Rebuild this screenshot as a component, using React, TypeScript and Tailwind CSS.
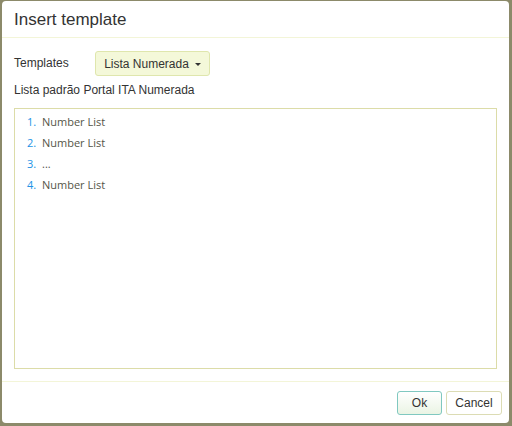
import React from "react";

export default function App() {
  const items = ["Number List", "Number List", "...", "Number List"];
  return (
    <div className="w-[512px] h-[426px] bg-[#8c8a6a] pl-[2px] pr-[3px] pt-[1px] pb-[3px]" style={{ fontFamily: '"Liberation Sans", Arial, sans-serif' }}>
      <div className="w-full h-full bg-white rounded-[4px] flex flex-col">
        <div className="h-[37px] border-b border-[#f3f5d8] flex items-center px-[12px]">
          <span className="text-[17px] text-[#333] leading-none">Insert template</span>
        </div>
        <div className="flex-1 flex flex-col px-[12px] pt-[13px] pb-[12px]">
          <div className="flex items-center h-[25px]">
            <span className="w-[81px] text-[12px] text-[#333] -mt-[2px]">Templates</span>
            <button className="h-[25px] w-[115px] bg-[#f4f8d9] border border-[#dfe6ad] rounded-[3px] flex items-center justify-center gap-[6px] text-[12px] text-[#333]">
              <span>Lista Numerada</span>
              <span className="w-0 h-0 border-l-[3px] border-r-[3px] border-t-[3px] border-l-transparent border-r-transparent border-t-[#333] mt-[1px]" />
            </button>
          </div>
          <div className="text-[12px] text-[#333] mt-[7px] leading-[14px]">Lista padrão Portal ITA Numerada</div>
          <div className="mt-[11px] flex-1 border border-[#dcdca8] pt-[3px] pl-[12px]" style={{ fontFamily: '"Open Sans", sans-serif' }}>
            {items.map((t, i) => (
              <div key={i} className="flex h-[21px] items-center text-[11px]">
                <span className="w-[15px] text-[#2293e6]">{i + 1}.</span>
                <span className="text-[#555548]">{t}</span>
              </div>
            ))}
          </div>
        </div>
        <div className="h-[42px] border-t border-[#f3f5d8] flex items-center justify-end gap-[4px] pr-[7px] pt-[1px]">
          <button className="h-[24px] w-[45px] rounded-[3px] border border-[#80c8c0] bg-gradient-to-b from-white to-[#eaf4e4] text-[12px] text-[#333]">Ok</button>
          <button className="h-[24px] w-[56px] rounded-[3px] border border-[#dcdcb4] bg-white text-[12px] text-[#333]">Cancel</button>
        </div>
      </div>
    </div>
  );
}
